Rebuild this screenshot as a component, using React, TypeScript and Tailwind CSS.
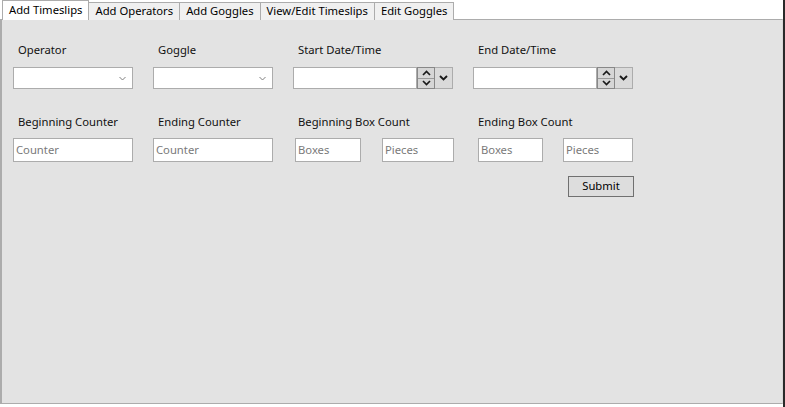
import React from "react";

const font = { fontFamily: '"Noto Sans", "Liberation Sans", sans-serif' };

function Combo() {
  return (
    <div className="relative w-[120px] h-[22px] bg-white border border-[#acacac]">
      <svg className="absolute right-[6px] top-[8px]" width="7" height="5" viewBox="0 0 7 5">
        <path d="M0.5 1 L3.5 4 L6.5 1" fill="none" stroke="#808080" strokeWidth="1" />
      </svg>
    </div>
  );
}

function DatePicker() {
  return (
    <div className="flex h-[22px]">
      <div className="w-[124px] h-[22px] bg-white border border-[#acacac]" />
      <div className="w-[18px] h-[22px] bg-[#d6d6d6] border border-[#888888] flex flex-col">
        <div className="flex-1 flex items-center justify-center border-b border-[#9a9a9a]">
          <svg width="9" height="6" viewBox="0 0 9 6">
            <path d="M1 5 L4.5 1.5 L8 5" fill="none" stroke="#1a1a1a" strokeWidth="1.7" />
          </svg>
        </div>
        <div className="flex-1 flex items-center justify-center">
          <svg width="9" height="6" viewBox="0 0 9 6">
            <path d="M1 1 L4.5 4.5 L8 1" fill="none" stroke="#1a1a1a" strokeWidth="1.7" />
          </svg>
        </div>
      </div>
      <div className="w-[18px] h-[22px] bg-[#dadada] border border-l-0 border-[#acacac] flex items-center justify-center">
        <svg width="9" height="6" viewBox="0 0 9 6">
          <path d="M1 1 L4.5 4.5 L8 1" fill="none" stroke="#1a1a1a" strokeWidth="1.9" />
        </svg>
      </div>
    </div>
  );
}

function TextBox({ w, placeholder }: { w: string; placeholder: string }) {
  return (
    <div className={`${w} h-[24px] bg-white border border-[#acacac] flex items-center pl-[2px] text-[#7a7a7a]`}>
      {placeholder}
    </div>
  );
}

function Label({ children }: { children: React.ReactNode }) {
  return <div className="h-[16px] leading-[16px] pl-[5px] text-[#111111]">{children}</div>;
}

export default function App() {
  const tabs = ["Add Operators", "Add Goggles", "View/Edit Timeslips", "Edit Goggles"];
  return (
    <div style={font} className="w-[785px] h-[407px] bg-white text-[11.25px] flex">
      <div className="w-[783px] h-full flex flex-col">
        {/* Tab strip */}
        <div className="h-[20px] flex items-end pl-[2px] relative z-10">
          <div className="h-[20px] px-[6px] bg-white border border-b-0 border-[#acacac] leading-[18px] text-black">
            Add Timeslips
          </div>
          {tabs.map((t) => (
            <div
              key={t}
              className="h-[18px] px-[6px] bg-[#f0f0f0] border border-l-0 border-b-0 border-[#acacac] leading-[16px] text-black"
            >
              {t}
            </div>
          ))}
        </div>
        {/* Panel */}
        <div className="h-[385px] bg-[#e3e3e3] border border-l-2 border-[#acacac] border-r-[#d8d8d8] -mt-px pl-[11px]">
          <div className="pt-[22px] flex">
            <div className="w-[140px]">
              <Label>Operator</Label>
              <div className="mt-[9px]"><Combo /></div>
            </div>
            <div className="w-[140px]">
              <Label>Goggle</Label>
              <div className="mt-[9px]"><Combo /></div>
            </div>
            <div className="w-[180px]">
              <Label>Start Date/Time</Label>
              <div className="mt-[9px]"><DatePicker /></div>
            </div>
            <div className="w-[180px]">
              <Label>End Date/Time</Label>
              <div className="mt-[9px]"><DatePicker /></div>
            </div>
          </div>
          <div className="mt-[25px] flex">
            <div className="w-[140px]">
              <Label>Beginning Counter</Label>
              <div className="mt-[8px]"><TextBox w="w-[120px]" placeholder="Counter" /></div>
            </div>
            <div className="w-[140px]">
              <Label>Ending Counter</Label>
              <div className="mt-[8px]"><TextBox w="w-[120px]" placeholder="Counter" /></div>
            </div>
            <div className="w-[180px]">
              <Label>Beginning Box Count</Label>
              <div className="mt-[8px] flex pl-[2px] gap-[21px]">
                <TextBox w="w-[66px]" placeholder="Boxes" />
                <TextBox w="w-[72px]" placeholder="Pieces" />
              </div>
            </div>
            <div className="w-[180px]">
              <Label>Ending Box Count</Label>
              <div className="mt-[8px] flex pl-[5px] gap-[20px]">
                <TextBox w="w-[65px]" placeholder="Boxes" />
                <TextBox w="w-[70px]" placeholder="Pieces" />
              </div>
            </div>
          </div>
          <div className="mt-[14px] flex">
            <div className="ml-[555px] w-[66px] h-[21px] bg-[#dddddd] border border-[#707070] flex items-center justify-center text-black">
              Submit
            </div>
          </div>
        </div>
        <div className="flex-1 bg-white" />
      </div>
      <div className="w-[2px] h-full bg-[#2a2a2a]" />
    </div>
  );
}
